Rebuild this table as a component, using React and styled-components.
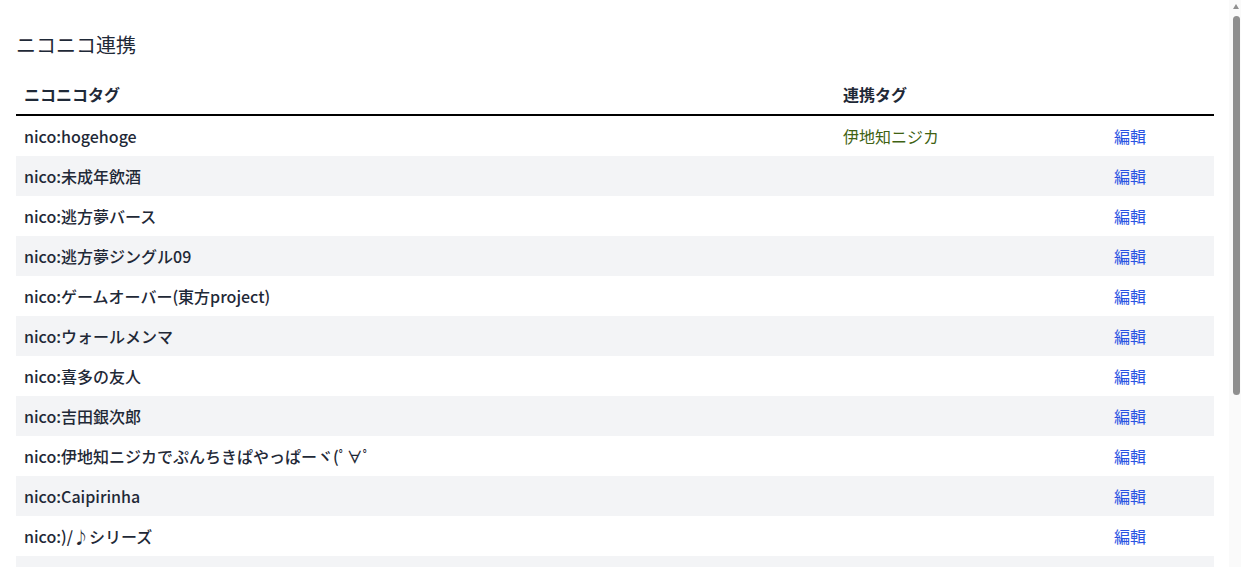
import React from "react";
import styled, { createGlobalStyle } from "styled-components";

const tags = [
  { nico: "nico:hogehoge", linked: "伊地知ニジカ" },
  { nico: "nico:未成年飲酒" },
  { nico: "nico:逃方夢バース" },
  { nico: "nico:逃方夢ジングル09" },
  { nico: "nico:ゲームオーバー(東方project)" },
  { nico: "nico:ウォールメンマ" },
  { nico: "nico:喜多の友人" },
  { nico: "nico:吉田銀次郎" },
  { nico: "nico:伊地知ニジカでぷんちきぱやっぱーヾ(ﾟ∀ﾟ" },
  { nico: "nico:Caipirinha" },
  { nico: "nico:)/♪シリーズ" },
  { nico: "nico:後藤ひとり" },
  { nico: "nico:結束バンド" },
];

const GlobalStyle = createGlobalStyle`
  html, body {
    margin: 0;
    height: 100%;
    overflow: hidden;
  }
  body {
    background: #fff;
    font-family: "Noto Sans CJK JP", "Noto Sans", sans-serif;
    color: #1f2937;
  }
`;

const App = () => {
  return (
    <Shell>
      <GlobalStyle />
      <Main>
        <Title>ニコニコ連携</Title>
        <Table>
          <colgroup>
            <col style={{ width: 819 }} />
            <col style={{ width: 271 }} />
            <col />
          </colgroup>
          <thead>
            <tr>
              <Th>ニコニコタグ</Th>
              <Th>連携タグ</Th>
              <Th></Th>
            </tr>
          </thead>
          <tbody>
            {tags.map((t) => (
              <Row key={t.nico}>
                <Td>{t.nico}</Td>
                <LinkedTag>{t.linked || ""}</LinkedTag>
                <Td>
                  <EditLink href="#">編輯</EditLink>
                </Td>
              </Row>
            ))}
          </tbody>
        </Table>
      </Main>
      <ScrollTrack>
        <ScrollArrow />
        <ScrollThumb />
      </ScrollTrack>
    </Shell>
  );
};

const Shell = styled.div`
  display: flex;
  height: 100vh;
  overflow: hidden;
`;

const Main = styled.main`
  flex: 1;
  min-width: 0;
  padding: 30px 15px 0 16px;
  overflow: hidden;
`;

/* scrollbar chrome, as seen in the screenshot */
const ScrollTrack = styled.div`
  width: 12px;
  flex-shrink: 0;
  background: #fafafa;
  display: flex;
  flex-direction: column;
  align-items: center;
  padding-left: 2px;
  box-sizing: border-box;
`;

const ScrollArrow = styled.div`
  margin-top: 4px;
  width: 0;
  height: 0;
  border-left: 3.5px solid transparent;
  border-right: 3.5px solid transparent;
  border-bottom: 5px solid #8f8f8f;
`;

const ScrollThumb = styled.div`
  margin-top: 7px;
  width: 7px;
  height: 379px;
  border-radius: 4px;
  background: #8f8f8f;
`;

const Title = styled.h2`
  margin: 0 0 14px;
  font-size: 20px;
  line-height: 30px;
  font-weight: 400;
  color: #1f2937;
`;

const Table = styled.table`
  width: 100%;
  border-collapse: collapse;
  table-layout: fixed;
  font-size: 16px;
`;

const Th = styled.th`
  text-align: left;
  padding: 8px;
  line-height: 24px;
  font-weight: 700;
  color: #1f2937;
  border-bottom: 2px solid #000;
`;

const Row = styled.tr`
  &:nth-child(even) {
    background: #f3f4f6;
  }
`;

const Td = styled.td`
  padding: 8px;
  line-height: 24px;
  font-weight: 500;
  color: #1f2937;
  white-space: nowrap;
`;

const LinkedTag = styled(Td)`
  font-weight: 400;
  color: #3f6212;
`;

const EditLink = styled.a`
  font-weight: 400;
  color: #2952e3;
  text-decoration: none;
`;

export default App;
